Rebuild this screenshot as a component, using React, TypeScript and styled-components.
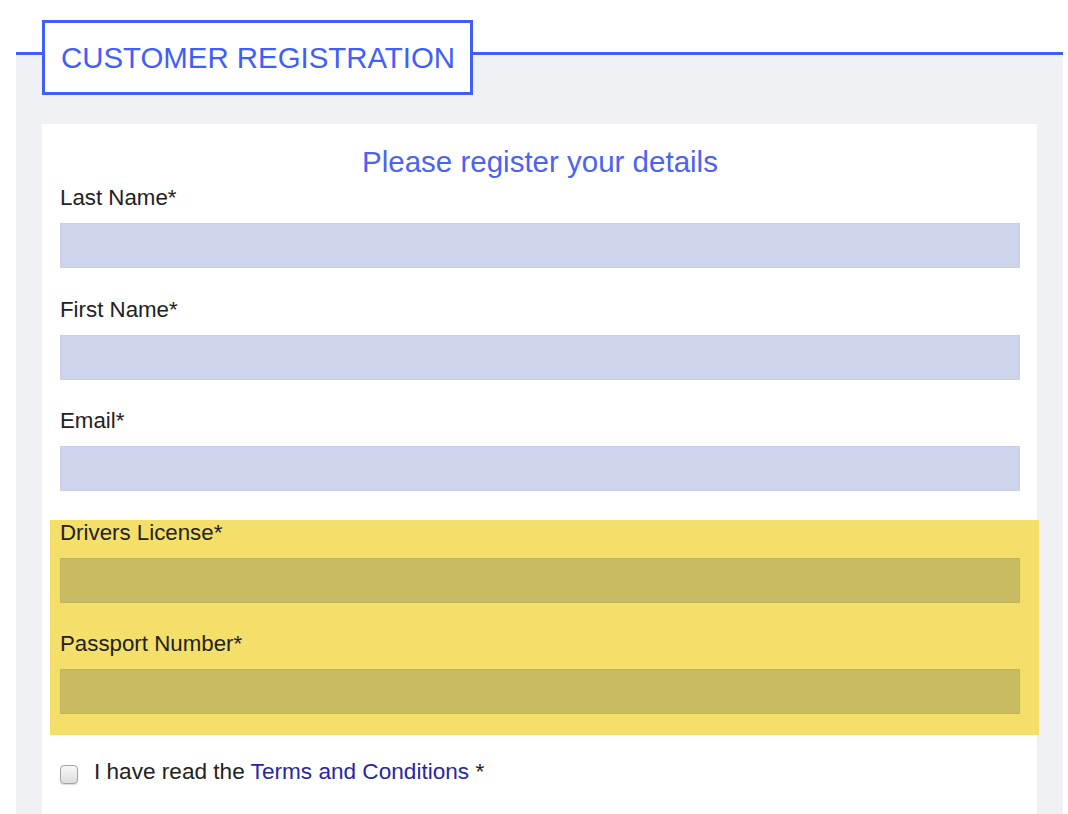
import { FC } from 'react';
import { createGlobalStyle, styled } from 'styled-components';

const GlobalStyle = createGlobalStyle`
  html, body {
    margin: 0;
    padding: 0;
    background: #ffffff;
    font-family: 'Liberation Sans', Arial, sans-serif;
  }
`;

const Page = styled.div`
  padding: 52px 5px 0 16px;
`;

const Panel = styled.section`
  border-top: 3px solid #3f5efb;
  background-color: #f0f1f5;
  padding: 0 26px;
  display: flex;
  flex-direction: column;
`;

const Legend = styled.h1`
  align-self: flex-start;
  margin: -35px 0 0 0;
  padding: 18px 15px 18px 16px;
  border: 3px solid #3f5efb;
  background-color: #ffffff;
  color: #3f5efb;
  font-size: 29.4px;
  line-height: 33px;
  font-weight: 400;
`;

const Card = styled.form`
  margin-top: 29px;
  background-color: #ffffff;
  padding: 21px 17px 60px 18px;
  display: flex;
  flex-direction: column;
`;

const Heading = styled.h2`
  margin: 0 0 7px;
  text-align: center;
  color: #4a63f2;
  font-size: 29.5px;
  line-height: 33px;
  font-weight: 400;
`;

const Fields = styled.div`
  display: flex;
  flex-direction: column;
  gap: 28.5px;
`;

const Highlight = styled.div`
  display: flex;
  flex-direction: column;
  gap: 28.5px;
  margin: 0 -19px 0 -10px;
  padding: 0 19px 21px 10px;
  background-color: #f4df6a;
`;

const Field = styled.div`
  display: flex;
  flex-direction: column;
  gap: 13px;
`;

const Label = styled.label`
  font-size: 22.3px;
  line-height: 25px;
  color: #222222;
`;

const Input = styled.input<{ $tone: 'blue' | 'olive' }>`
  box-sizing: border-box;
  height: 45px;
  width: 100%;
  margin: 0;
  border: 1px solid ${({ $tone }) => ($tone === 'blue' ? '#c8cde8' : '#c0b35c')};
  background-color: ${({ $tone }) => ($tone === 'blue' ? '#cfd4ed' : '#c8bb62')};
  outline: none;
`;

const TermsRow = styled.div`
  display: flex;
  align-items: flex-start;
  gap: 16px;
  margin-top: 24px;
  font-size: 22.6px;
  line-height: 25px;
  color: #222222;
`;

const Checkbox = styled.input`
  appearance: none;
  box-sizing: border-box;
  width: 18px;
  height: 19px;
  margin: 6px 0 0 0;
  border: 1px solid #a3a3a3;
  border-radius: 4px;
  background: linear-gradient(#f7f7f7, #dedede);
  box-shadow: 0 1px 1px rgba(0, 0, 0, 0.15);
`;

const TermsLink = styled.a`
  color: #28279f;
  text-decoration: none;
`;

const fields = ['Last Name*', 'First Name*', 'Email*'];
const idFields = ['Drivers License*', 'Passport Number*'];

const App: FC = () => {
  return (
    <>
      <GlobalStyle />
      <Page>
        <Panel>
          <Legend>CUSTOMER REGISTRATION</Legend>
          <Card>
            <Heading>Please register your details</Heading>
            <Fields>
              {fields.map((f) => (
                <Field key={f}>
                  <Label>{f}</Label>
                  <Input $tone="blue" />
                </Field>
              ))}
              <Highlight>
                {idFields.map((f) => (
                  <Field key={f}>
                    <Label>{f}</Label>
                    <Input $tone="olive" />
                  </Field>
                ))}
              </Highlight>
            </Fields>
            <TermsRow>
              <Checkbox type="checkbox" />
              <span>
                I have read the <TermsLink href="#">Terms and Conditions</TermsLink> *
              </span>
            </TermsRow>
          </Card>
        </Panel>
      </Page>
    </>
  );
};

export default App;
